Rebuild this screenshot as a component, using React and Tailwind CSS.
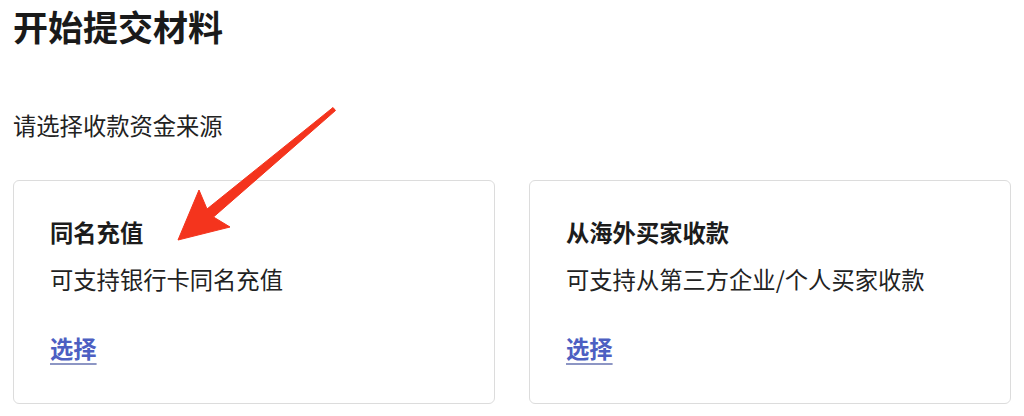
import React from 'react';

const cards = [
  { title: '同名充值', desc: '可支持银行卡同名充值' },
  { title: '从海外买家收款', desc: '可支持从第三方企业/个人买家收款' },
];

function Arrow() {
  // red annotation arrow drawn over the page
  return (
    <svg
      className="absolute left-0 top-0 pointer-events-none"
      width="1024"
      height="416"
      viewBox="0 0 1024 416"
    >
      <polygon
        points="178,240 199,190 207,209 333,107.5 335.5,110.5 213.5,217 230,227"
        fill="#f4341d"
        stroke="#f4341d"
        strokeWidth="1"
        strokeLinejoin="round"
      />
    </svg>
  );
}

function SourceCard({ title, desc }) {
  return (
    <div className="w-[483px] rounded-[6px] border border-[#dcdcdc] bg-white pl-[36px] pt-[37px] pb-[41px]">
      <div className="flex h-[28px] items-center text-[23.3px] font-bold text-[#1c1c1c]">{title}</div>
      <div className="mt-[19px] flex h-[28px] items-center text-[23.3px] text-[#222]">{desc}</div>
      <div className="mt-[41px] flex h-[28px] items-center">
        <a
          href="#"
          className="text-[23.3px] font-semibold text-[#4d5fc2] underline decoration-[#8d96c4] decoration-[1.5px] underline-offset-[5px]"
        >
          选择
        </a>
      </div>
    </div>
  );
}

export default function App() {
  return (
    <div
      className="relative h-[416px] w-[1024px] overflow-hidden bg-white px-[13px]"
      style={{ fontFamily: '"Noto Sans CJK SC", "Noto Sans", sans-serif' }}
    >
      <div className="flex h-[50px] items-center text-[35px] font-bold leading-none text-[#1a1a1a]">
        开始提交材料
      </div>
      <div className="mt-[59px] flex h-[34px] items-center text-[23.3px] leading-none text-[#222]">
        请选择收款资金来源
      </div>
      <div className="mt-[37px] flex gap-[34px]">
        {cards.map(c => (
          <SourceCard key={c.title} {...c} />
        ))}
      </div>
      <Arrow />
    </div>
  );
}
